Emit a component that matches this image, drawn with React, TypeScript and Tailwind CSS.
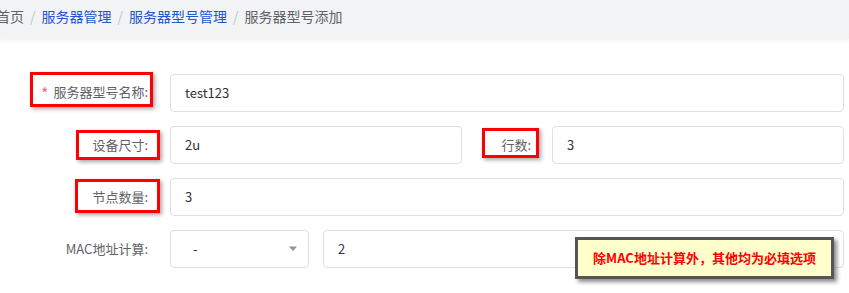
import React from 'react';

const font = "font-['Noto_Sans_CJK_SC','Noto_Sans',sans-serif]";

const Mark: React.FC<{ className: string }> = ({ className }) => (
    <span className={`absolute border-[3px] border-[#f00] shadow-[2px_2px_4px_rgba(0,0,0,0.35)] pointer-events-none ${className}`} />
);

const Field: React.FC<{ value: string; className?: string }> = ({ value, className = '' }) => (
    <div className={`h-[38px] border border-[#dcdfe6] rounded-[4px] bg-white flex items-center pl-[14px] text-[13px] text-[#303133] ${className}`}>
        {value}
    </div>
);

const Label: React.FC<{ text: string; required?: boolean; className?: string }> = ({ text, required, className = '' }) => (
    <div className={`flex items-center justify-end text-[13px] text-[#606266] ${className}`}>
        {required && <span className="text-[#f56c6c] text-[16px] leading-none mr-[5px] mt-[2px]">*</span>}
        {text}
    </div>
);

const App: React.FC = () => {
    return (
        <div className={`relative w-[849px] h-[293px] bg-white overflow-hidden ${font}`}>
            <div className="h-[39px] bg-[#f2f3f5] flex items-center text-[14px] shadow-[0_2px_4px_rgba(0,0,0,0.06)] pb-[7px]">
                <span className="ml-[-4px] text-[#606266]">首页</span>
                <span className="mx-[6px] text-[#c0c4cc]">/</span>
                <span className="text-[#2354d4]">服务器管理</span>
                <span className="mx-[6px] text-[#c0c4cc]">/</span>
                <span className="text-[#2354d4]">服务器型号管理</span>
                <span className="mx-[6px] text-[#c0c4cc]">/</span>
                <span className="text-[#606266]">服务器型号添加</span>
            </div>

            <div className="pt-[35px] flex flex-col gap-[14px]">
                <div className="relative flex items-center h-[38px]">
                    <Label text="服务器型号名称:" required className="w-[170px] pr-[22px] mt-[-3px]" />
                    <Field value="test123" className="w-[674px]" />
                    <Mark className="left-[30px] top-[-2px] w-[123px] h-[35px]" />
                </div>

                <div className="relative flex items-center h-[38px]">
                    <Label text="设备尺寸:" className="w-[170px] pr-[22px]" />
                    <Field value="2u" className="w-[292px]" />
                    <Label text="行数:" className="w-[90px] pr-[21px]" />
                    <Field value="3" className="w-[292px]" />
                    <Mark className="left-[76px] top-[4px] w-[84px] h-[30px]" />
                    <Mark className="left-[482px] top-[2px] w-[57px] h-[30px]" />
                </div>

                <div className="relative flex items-center h-[38px]">
                    <Label text="节点数量:" className="w-[170px] pr-[22px]" />
                    <Field value="3" className="w-[674px]" />
                    <Mark className="left-[75px] top-[1px] w-[85px] h-[34px]" />
                </div>

                <div className="relative flex items-center h-[38px]">
                    <Label text="MAC地址计算:" className="w-[170px] pr-[22px]" />
                    <div className="w-[139px] h-[38px] border border-[#dcdfe6] rounded-[4px] flex items-center justify-between pl-[22px] pr-[10px] text-[13px] text-[#303133]">
                        <span>-</span>
                        <svg width="10" height="6" viewBox="0 0 10 6">
                            <path d="M1 0.5 L9 0.5 L5 5 Z" fill="#909399" />
                        </svg>
                    </div>
                    <Field value="2" className="w-[521px] ml-[14px]" />
                </div>
            </div>

            <div className="absolute left-[575px] top-[237px] w-[259px] h-[42px] border-[3px] border-[#555] bg-[#ffffcc] shadow-[3px_3px_4px_rgba(0,0,0,0.45)] flex items-center justify-center text-[13px] font-bold text-[#f00]">
                除MAC地址计算外，其他均为必填选项
            </div>
        </div>
    );
};

export default App;
